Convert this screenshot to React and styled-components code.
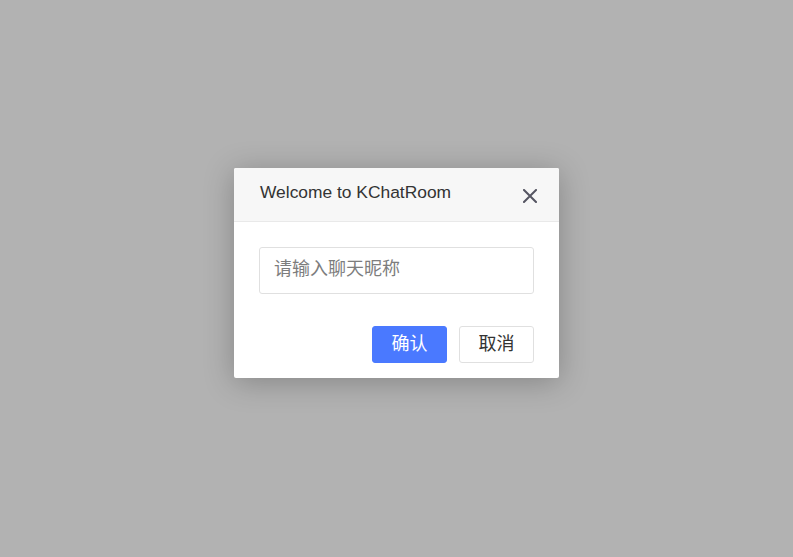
import React, {useState} from 'react';
import styled, {createGlobalStyle} from 'styled-components';

const GlobalStyle = createGlobalStyle`
html, body {
  margin: 0;
  padding: 0;
  background: #fff;
}
* {
  box-sizing: border-box;
}
`;

const Overlay = styled.div`
width: 100vw;
height: 100vh;
background: rgba(0, 0, 0, 0.3);
display: flex;
justify-content: center;
align-items: flex-start;
padding-top: 168px;
font-family: "Liberation Sans", Arial, "Noto Sans CJK SC", sans-serif;
`;

const Dialog = styled.div`
width: 325px;
background: #fff;
border-radius: 2px;
box-shadow: 0 4px 30px rgba(0, 0, 0, 0.25);
overflow: hidden;
`;

const DialogHeader = styled.div`
height: 54px;
background: #f7f7f7;
border-bottom: 1px solid #e9e9e9;
display: flex;
align-items: center;
justify-content: space-between;
padding: 0 21px 0 26px;
`;

const DialogTitle = styled.h3`
margin: 0 0 4px;
font-size: 17.4px;
font-weight: normal;
color: #333;
`;

const CloseButton = styled.button`
border: none;
background: none;
padding: 0;
width: 16px;
height: 16px;
display: flex;
align-items: center;
justify-content: center;
cursor: pointer;
margin-top: 3px;
`;

const DialogBody = styled.div`
padding: 25px 25px 0;
`;

const NameInput = styled.input`
width: 100%;
height: 47px;
border: 1px solid #e0e0e0;
border-radius: 3px;
padding: 0 14px 2px;
font-size: 18px;
font-family: "Liberation Sans", "Noto Sans CJK SC", sans-serif;
color: #333;
outline: none;
&::placeholder {
  color: #7d7d7d;
}
`;

const DialogFooter = styled.div`
display: flex;
justify-content: flex-end;
gap: 12px;
padding: 32px 25px 15px;
`;

const Button = styled.button`
width: 75px;
height: 37px;
border-radius: 3px;
font-size: 18px;
font-family: "Liberation Sans", "Noto Sans CJK SC", sans-serif;
cursor: pointer;
padding: 0 0 5px;
border: 1px solid ${props => props.primary ? '#4a79ff' : '#e0e0e0'};
background: ${props => props.primary ? '#4a79ff' : '#fff'};
color: ${props => props.primary ? '#fff' : '#333'};
`;

const CloseIcon = () => (
    <svg width="14" height="14" viewBox="0 0 14 14">
        <path d="M1 1 L13 13 M13 1 L1 13" stroke="#555562" strokeWidth="2" strokeLinecap="square"/>
    </svg>
);

const App = () => {
    const [nickname, setNickname] = useState('');

    return (
        <>
            <GlobalStyle/>
            <Overlay>
                <Dialog>
                    <DialogHeader>
                        <DialogTitle>Welcome to KChatRoom</DialogTitle>
                        <CloseButton><CloseIcon/></CloseButton>
                    </DialogHeader>
                    <DialogBody>
                        <NameInput
                            placeholder="请输入聊天昵称"
                            value={nickname}
                            onChange={e => setNickname(e.target.value)}/>
                    </DialogBody>
                    <DialogFooter>
                        <Button primary>确认</Button>
                        <Button>取消</Button>
                    </DialogFooter>
                </Dialog>
            </Overlay>
        </>
    )
};
export default App;
